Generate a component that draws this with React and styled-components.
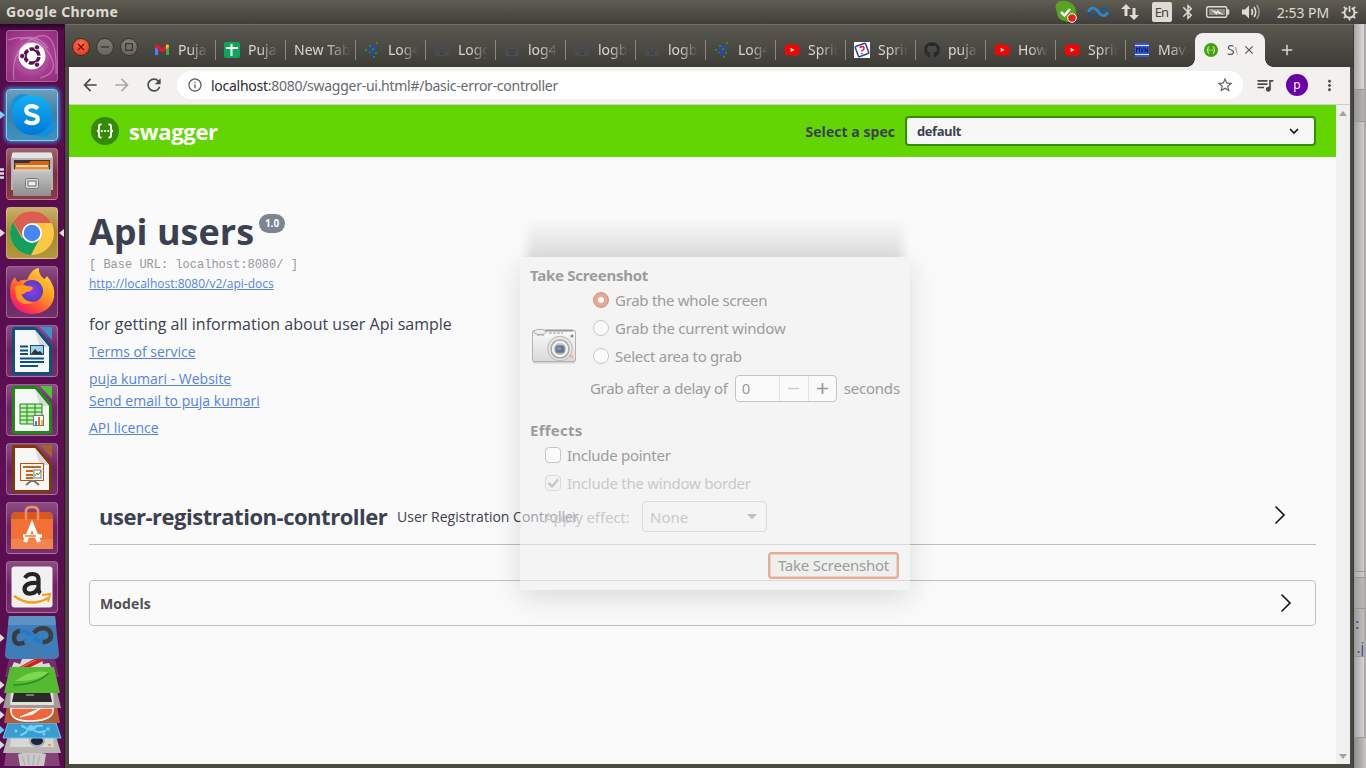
import React from "react";
import styled, { createGlobalStyle, css } from "styled-components";
import {
  MdArrowBack, MdArrowForward, MdRefresh, MdInfoOutline, MdStarBorder,
  MdQueueMusic, MdMoreVert, MdClose, MdAdd, MdBluetooth,
} from "react-icons/md";
import { FaGithub } from "react-icons/fa";

const GlobalStyle = createGlobalStyle`
  * { box-sizing: border-box; }
  body { margin: 0; overflow: hidden; background: #3c3b37; }
  svg { display: block; flex: none; }
`;

const ui = `"Noto Sans", "Open Sans", sans-serif`;
const page = `"Open Sans", "Noto Sans", sans-serif`;

const Screen = styled.div`
  width: 1366px; height: 768px; overflow: hidden; position: relative;
  display: flex; flex-direction: column; font-family: ${ui};
`;
const Label = styled.span`
  white-space: nowrap; letter-spacing: ${(p) => p.$ls || 0}px;
`;

/* ---------- system bar ---------- */
const SystemBar = styled.header`
  height: 24px; flex: none; display: flex; align-items: center; justify-content: space-between;
  padding: 0 7px 0 6px; background: linear-gradient(#5f5c51, #58554c 25%, #403f3a);
  color: #dfdbd2; font-size: 14px;
`;
const AppName = styled(Label)`font-weight: 700; margin-top: -2px;`;
const Tray = styled.div`display: flex; align-items: center; height: 24px;`;
const TraySlot = styled.div`
  width: ${(p) => p.$w}px; height: 24px; display: flex; align-items: center; justify-content: center;
`;
const LangBox = styled.div`
  width: 20px; height: 20px; border-radius: 2px; background: #dfdbd2; color: #45443e;
  font-size: 13px; line-height: 20px; text-align: center; letter-spacing: -0.8px;
`;

/* ---------- desktop area ---------- */
const Desktop = styled.div`flex: 1; min-height: 0; display: flex;`;
const Launcher = styled.nav`
  width: 65px; flex: none; display: flex; flex-direction: column; align-items: flex-start; gap: 7px;
  padding-top: 6px; background: linear-gradient(#2b0526, #560b4d 8px, #5c0f52 60%, #570d4e);
  border-right: 1px solid #3a0a35;
`;
const LaunchRow = styled.div`position: relative; width: 64px; height: 52px; padding-left: 6px; flex: none;`;
const tileLook = {
  dash: "radial-gradient(circle at 50% 50%, #d48ac4, #a33a8d 60%, #8e2d7c)",
  skype: "linear-gradient(#6d9fb8, #3d7fa6 50%, #4390bd)",
  files: "linear-gradient(#9c626b, #7c2f3e 50%, #8c3a44)",
  chrome: "linear-gradient(#c9b06a, #a68932 45%, #b4973c)",
  plain: "linear-gradient(#8d4c84, #6a2360 50%, #752f6b)",
};
const Tile = styled.div`
  width: 52px; height: 52px; border-radius: 4px; overflow: hidden;
  background: ${(p) => tileLook[p.$look]};
  border: 1px solid rgba(255, 255, 255, 0.25);
  display: flex; align-items: center; justify-content: center;
  ${(p) => p.$look === "skype" && css`border-color: #7fd0fb; box-shadow: 0 0 4px 1px #38a6e8;`}
`;
const Marker = styled.svg`position: absolute; top: 20px; ${(p) => (p.$right ? "left: 59px;" : "left: 0;")}`;
const StackHolder = styled.div`margin-top: -6px;`;

const WindowFrame = styled.main`
  width: 1289px; flex: none; display: flex; flex-direction: column;
  padding: 0 3px 4px 4px; background: #4a4942; border-top: 1px solid #706e66;
  border-right: 1px solid #393834;
`;
const Behind = styled.aside`
  flex: 1; min-width: 0; display: flex; flex-direction: column; background: linear-gradient(90deg, #8f8d8b, #bcbab8 80%, #cac8c5);
`;
const BehindBlock = styled.div`
  height: ${(p) => p.$h}px; flex: none; overflow: hidden;
  background: linear-gradient(90deg, ${(p) => p.$a}, ${(p) => p.$b});
  border-bottom: 1px solid #989694; border-right: 2px solid #aaa8a6;
  display: flex; flex-direction: column; justify-content: flex-end; align-items: flex-end;
  color: #2d4a8e; font-size: 14px; line-height: 17px;
`;
const BehindMark = styled.span`margin: 0 5px 7px 0; color: #2a2aa8;`;

/* ---------- browser chrome ---------- */
const TabStrip = styled.div`
  height: 42px; flex: none; display: flex; align-items: flex-end; margin: 0 -3px 0 -4px; padding-left: 7px;
  background: linear-gradient(#5a5950, #4b4a43 50%, #3d3c37);
`;
const Controls = styled.div`display: flex; gap: 6px; height: 42px; align-items: center; padding-top: 2px; width: 74px;`;
const Control = styled.div`
  width: 18px; height: 18px; border-radius: 50%; border: 1px solid #35342f;
  display: flex; align-items: center; justify-content: center;
  background: ${(p) => (p.$close ? "radial-gradient(circle at 50% 30%, #ff6a4a, #e8301c)" : "linear-gradient(#7d7b72, #68675f)")};
`;
const Tab = styled.div`
  width: 70px; height: 34px; display: flex; align-items: center; gap: 8px; padding: 0 0 1px 8px;
  color: #dad6cd; font-size: 14px;
  background: linear-gradient(#8b897f, #8b897f) right 7px / 1px 20px no-repeat;
  ${(p) => p.$last && css`background: none;`}
`;
const TabText = styled.span`
  flex: 1; overflow: hidden; white-space: nowrap; line-height: 20px; margin-right: ${(p) => (p.$wide ? 5 : 8)}px;
  letter-spacing: ${(p) => p.$ls || 0}px;
  mask-image: linear-gradient(90deg, #000 ${(p) => (p.$wide ? 32 : 12)}px, transparent 100%);
`;
const ActiveTab = styled.div`
  width: 70px; height: 34px; display: flex; align-items: center; padding: 0 9px 1px 9px; margin-left: -1px; position: relative;
  background: #f2f1f0; border-radius: 8px 8px 0 0; color: #55544f; font-size: 14px;
  &::before, &::after { content: ""; position: absolute; bottom: 0; width: 8px; height: 8px; }
  &::before { left: -8px; background: radial-gradient(circle at 0 0, transparent 7.5px, #f2f1f0 8px); }
  &::after { right: -8px; background: radial-gradient(circle at 100% 0, transparent 7.5px, #f2f1f0 8px); }
`;
const ActiveText = styled.span`
  width: 12px; margin-left: 9px; margin-right: 4px; overflow: hidden; white-space: nowrap;
  mask-image: linear-gradient(90deg, #000 6px, transparent 12px);
`;
const NewTab = styled.div`width: 44px; height: 34px; display: flex; align-items: center; justify-content: center; color: #dad6cd;`;

const Toolbar = styled.div`
  height: 38px; flex: none; display: flex; align-items: center; background: #f2f1f0;
  border-bottom: 1px solid #cfcdca; color: #4a4a4a; padding: 0 0 1px 5px;
`;
const NavIcon = styled.div`
  width: 32px; display: flex; justify-content: center; color: ${(p) => (p.$dim ? "#aaa9a8" : "#4a4a4a")};
`;
const Omnibox = styled.div`
  width: 1066px; height: 28px; border-radius: 14px; background: #fff; margin-left: 7px;
  display: flex; align-items: center; padding: 0 9px 0 10px; color: #5f6368;
`;
const Url = styled(Label)`
  flex: 1; margin-left: 8px; font-size: 14px; color: #66696d;
  b { font-weight: 400; color: #2a2b2d; }
`;
const QueueSlot = styled.div`width: 22px; margin-left: 11px; display: flex; justify-content: center;`;
const Avatar = styled.div`
  width: 22px; height: 22px; border-radius: 50%; background: #6a00a8; color: #fff;
  font-size: 12px; line-height: 21px; text-align: center; margin: 0 13px 0 10px;
`;

/* ---------- page ---------- */
const Viewport = styled.div`flex: 1; min-height: 0; display: flex; background: #fafafa;`;
const Page = styled.div`width: 1267px; font-family: ${page}; color: #3b4151;`;
const Scrollbar = styled.div`
  flex: 1; background: #f0f0f0; display: flex; flex-direction: column; justify-content: space-between; align-items: center;
  padding: 6px 0 5px;
`;
const Topbar = styled.div`
  height: 52px; background: #62d503; display: flex; align-items: center; padding: 0 20px 0 22px;
`;
const Brand = styled(Label)`color: #fff; font-weight: 700; font-size: 22px; margin-left: 10px; flex: 1; line-height: 30px;`;
const SpecLabel = styled(Label)`font-weight: 700; font-size: 14px; margin-right: 10px;`;
const SpecSelect = styled.div`
  width: 411px; height: 30px; border: 2px solid #398c05; border-radius: 4px; background: #f7f7f7;
  display: flex; align-items: center; justify-content: space-between; padding: 0 15px 0 10px; font-weight: 700; font-size: 13px;
`;
const Info = styled.section`padding: 50px 20px 0; display: flex; flex-direction: column; align-items: flex-start;`;
const TitleRow = styled.div`height: 50px; display: flex; align-items: flex-start;`;
const Title = styled.h1`margin: 0; font-size: 36px; line-height: 50px; font-weight: 700; white-space: nowrap;`;
const Version = styled.span`
  margin: 7px 0 0 5px; width: 26px; height: 19px; border-radius: 10px; background: #7d8492; color: #fff;
  font-size: 10px; font-weight: 700; line-height: 19px; text-align: center;
`;
const BaseUrl = styled.div`font: 12px/16px "Liberation Mono", monospace; color: #96989d; white-space: pre;`;
const Link = styled.a`
  color: #5483e0; text-decoration: underline; white-space: nowrap; font-size: ${(p) => p.$size || 14}px;
  line-height: 20px; margin-top: ${(p) => p.$mt}px;
`;
const Description = styled.p`margin: 19px 0 9px; font-size: 16px; line-height: 22px; letter-spacing: 0.01px;`;
const Section = styled.section`
  margin: 51px 20px 0; height: 56px; border-bottom: 1px solid #bcbdc4; display: flex; align-items: center; padding: 0 30px 0 10px;
  svg { margin-top: -4px; }
`;
const SectionName = styled.h2`margin: -2px 0 0; font-size: 22px; line-height: 40px; width: 288px; white-space: nowrap; letter-spacing: -0.48px;`;
const SectionNote = styled(Label)`font-size: 14px; margin-left: 10px; flex: 1;`;
const Models = styled.section`
  margin: 35px 20px 0; height: 46px; border: 1px solid #bfc0c4; border-radius: 4px;
  display: flex; align-items: center; justify-content: space-between; padding: 0 23px 0 10px;
  font-size: 14px; font-weight: 700; color: #505050; letter-spacing: 0.1px;
`;

/* ---------- screenshot dialog, fading over the page ---------- */
const Dialog = styled.div`
  position: absolute; left: 520px; top: 257px; width: 390px; height: 333px; padding: 9px 10px 0;
  background: rgba(239, 239, 239, 0.55); box-shadow: 0 8px 28px rgba(0, 0, 0, 0.13);
  color: #9c9c9b; font-size: 15px; display: flex; flex-direction: column;
  &::before {
    content: ""; position: absolute; left: 0; right: 0; bottom: 100%; height: 40px;
    background: linear-gradient(rgba(0,0,0,0), rgba(0,0,0,0.06) 50%, rgba(0,0,0,0.1));
    mask-image: linear-gradient(90deg, transparent, #000 14px, #000 376px, transparent);
  }
`;
const Heading = styled.div`
  font-weight: 700; height: 18px; line-height: 18px; white-space: nowrap; letter-spacing: ${(p) => p.$ls || 0}px;
  margin: ${(p) => (p.$second ? "9px 0 2px" : "0")};
`;
const GrabArea = styled.div`display: flex; height: 126px; margin-top: 2px;`;
const CameraCell = styled.div`width: 60px; flex: none; padding: 42px 0 0 1px;`;
const Options = styled.div`flex: 1; display: flex; flex-direction: column;`;
const Option = styled.label`
  height: 28px; flex: none; display: flex; align-items: center; gap: 6px; padding-left: ${(p) => p.$pad || 0}px;
  color: ${(p) => (p.$off ? "#c9c9c8" : "#9c9c9b")};
`;
const Radio = styled.i`
  width: 16px; height: 16px; border-radius: 50%; flex: none; background: ${(p) => (p.$on ? "radial-gradient(circle, #fff 2.5px, #e8a892 3.5px)" : "#fbfbfb")};
  border: 1px solid ${(p) => (p.$on ? "#cf9481" : "#cacaca")};
`;
const Check = styled.i`
  width: 16px; height: 16px; border-radius: 4px; flex: none; border: 1px solid ${(p) => (p.$off ? "#dadada" : "#c6c6c6")};
  background: ${(p) => (p.$off ? "#f2f2f2" : "#fbfbfb")}; display: flex; align-items: center; justify-content: center;
`;
const Delay = styled.div`display: flex; align-items: center; height: 28px; margin-top: 4px; white-space: nowrap;`;
const Spin = styled.div`
  width: 102px; height: 27px; flex: none; margin: 0 7px; border: 1px solid #c4c4c3; border-radius: 4px; background: #fafafa; display: flex; align-items: center;
`;
const SpinCell = styled.div`
  width: ${(p) => p.$w}px; height: 25px; display: flex; align-items: center; padding-left: ${(p) => (p.$text ? 6 : 0)}px;
  justify-content: ${(p) => (p.$text ? "flex-start" : "center")}; border-left: ${(p) => (p.$text ? "none" : "1px solid #e4e4e4")};
`;
const EffectRow = styled.div`
  display: flex; align-items: center; justify-content: space-between; height: 31px; flex: none; margin-top: 4px; padding-left: 14px;
  width: 237px; color: #c9c9c8; white-space: nowrap;
`;
const Combo = styled.div`
  width: 125px; height: 31px; flex: none; border: 1px solid #dcdcdc; border-radius: 4px; display: flex; align-items: center;
  justify-content: space-between; padding: 0 9px 0 7px;
`;
const TakeButton = styled.div`
  align-self: flex-end; width: 131px; height: 27px; margin: 20px 1px 0 0; border: 2px solid #e3ad9a; border-radius: 4px;
  background: #efefee; box-shadow: inset 0 0 0 1px #f5cfc1; text-align: center; line-height: 23px; white-space: nowrap;
`;

/* ---------- icons ---------- */
const Chevron = () => (
  <svg width="12" height="20" viewBox="0 0 12 20" fill="none" stroke="#151515" strokeWidth="1.6"><path d="M1.5 1.5 10 10l-8.5 8.5" /></svg>
);
const Gmail = () => (
  <svg width="16" height="16" viewBox="0 0 16 16">
    <path d="M1 4v9h3V6.5z" fill="#4285f4" /><path d="M12 6.5V13h3V4z" fill="#34a853" />
    <path d="M1 4.2C1 2.6 2.7 2 4 3l4 3.2L12 3v4.3l-4 3.2-4-3.2-3-2z" fill="#ea1430" /><path d="M12 3c1.4-1 3-.4 3 1.2V5l-3 2.4z" fill="#fbbc04" />
  </svg>
);
const Sheets = () => (
  <svg width="16" height="16" viewBox="0 0 16 16"><rect width="16" height="16" rx="2" fill="#0aa858" /><path d="M2 6h12M7.5 2v12" stroke="#fff" strokeWidth="2" /></svg>
);
const Pixels = () => (
  <svg width="16" height="16" viewBox="0 0 16 16">
    <path d="M3 5h2v2H3zM7 3h3v3H7zM5 7h3v2H5zM9 6h3v3H9zM7 9h3v3H7zM11 4h2v2h-2zM6 11h2v3H6z" fill="#2f43bd" />
    <path d="M12 0h2v2h-2zM5 3h2v2H5zM1 7h2v2H1zM8 6h2v2H8zM4 10h2v1H4zM11 10h2v2h-2zM9 14h2v2H9z" fill="#1e951e" />
  </svg>
);
const SadFolder = () => (
  <svg width="16" height="16" viewBox="0 0 16 16"><path d="M1 3h6l1 1h7v10H1z" fill="#4a4b4d" /><path d="M5 8l2 1M11 8 9 9M6 12q2-2 4 0" stroke="#38383a" fill="none" /></svg>
);
const YouTube = () => (
  <svg width="16" height="16" viewBox="0 0 16 16"><rect x="1" y="2.7" width="14.3" height="10.6" rx="2.6" fill="#f00" /><path d="M6.7 5.7v4.4L10.4 8z" fill="#fff" /></svg>
);
const Quiz = () => (
  <svg width="16" height="16" viewBox="0 0 16 16"><path fill="#fff" d="M0 0h16v16H0z" />
    <rect x="2.5" y="2.5" width="11" height="11" rx="1.5" fill="none" stroke="#27479a" strokeWidth="1.5" transform="rotate(-20 8 8)" />
    <path d="M6 6.2q.4-1.8 2.4-1.6T10 6.7Q9.800 8 8 8.500V9.500M7.800 11v1.200" stroke="#e8203c" strokeWidth="1.600" fill="none" /></svg>
);
const Mvn = () => (
  <svg width="16" height="16" viewBox="0 0 16 16"><path fill="#3558d8" d="M1 1h14v14H1z" /><path stroke="#dfe6ff" d="M1 3.500h14M1 12.500h14" />
    <path d="M2.500 10.500v-5l1.500 2 1.500-2v5M7 5.500l1.200 5 1.200-5M11 10.500v-5l2.500 5v-5" stroke="#14225f" fill="none" /></svg>
);
const SwaggerMark = ({ size, bg, line }) => (
  <svg width={size} height={size} viewBox="0 0 28 28"><circle cx="14" cy="14" r="14" fill={bg} />
    <g fill="none" stroke={line} strokeWidth="1.900"><path d="M10.500 7.500H9.500Q8 7.500 8 9v3q0 2-2 2 2 0 2 2v3q0 1.500 1.500 1.500h1M17.500 7.500h1Q20 7.500 20 9v3q0 2 2 2-2 0-2 2v3q0 1.500-1.500 1.500h-1" /></g>
    <g fill={line}><circle cx="10.800" cy="14" r="1.100" /><circle cx="14" cy="14" r="1.100" /><circle cx="17.200" cy="14" r="1.100" /></g></svg>
);

const DashIcon = () => (
  <svg width="52" height="52" viewBox="0 0 52 52">
    <g fill="none" stroke="#e3b3da" strokeOpacity=".5" strokeWidth="1.200"><path d="M8 50Q4 20 28 8T50 44M2 10q26-8 40 12t-8 26M14 10Q30 2 42 18" /></g>
    <circle cx="26" cy="27" r="14" fill="#7d2a6e" opacity=".35" /><circle cx="26" cy="26" r="13.500" fill="#fff" />
    <circle cx="26" cy="26" r="7" fill="none" stroke="#5c1350" strokeWidth="3.500" strokeDasharray="13 1.660" strokeDashoffset="-1" />
    <g fill="#5c1350" stroke="#fff" strokeWidth=".8"><circle cx="16.200" cy="26" r="2.600" /><circle cx="31" cy="17.300" r="2.600" /><circle cx="31" cy="34.700" r="2.600" /></g>
  </svg>
);
const SkypeIcon = () => (
  <svg width="52" height="52" viewBox="0 0 52 52">
    <defs><linearGradient id="sk" x2="0" y2="1"><stop stopColor="#14b2f2" /><stop offset="1" stopColor="#0078d8" /></linearGradient></defs>
    <circle cx="17" cy="17" r="12" fill="#1593d8" /><circle cx="36" cy="36" r="12" fill="#1090dd" /><circle cx="26" cy="26" r="20" fill="url(#sk)" />
    <path d="M32 19.500Q29 17 25.500 17.200q-5.500.2-5.200 4.300.2 3.300 5.500 4.300 6 1 6 4.300 0 4-6 4.100-4 0-6.600-2.400" fill="none" stroke="#fff" strokeWidth="4.200" />
  </svg>
);
const FilesIcon = () => (
  <svg width="52" height="52" viewBox="0 0 52 52">
    <defs><linearGradient id="fl" x2="0" y2="1"><stop stopColor="#c7c7c7" /><stop offset="1" stopColor="#8f8f8f" /></linearGradient></defs>
    <path d="M7 4h38l2 5v33H5V9z" fill="#b5b5b5" /><path d="M6 5h40v5H6z" fill="#e4e4e4" /><path d="M8 12h36v12H8z" fill="#353535" />
    <path d="M9 15h14l2-2h18v9H9z" fill="#d8641c" /><path d="M10 17h32v2H10z" fill="#f9d59f" /><path d="M9 19h34v3H9z" fill="#f08b3a" />
    <path d="M7 22h38v26H7z" fill="url(#fl)" /><path d="M7 22h38" stroke="#ddd" />
    <rect x="19.500" y="30.500" width="13" height="10" rx="2" fill="#ddd" stroke="#777" /><rect x="22" y="33" width="8" height="5" fill="#eee" stroke="#666" />
  </svg>
);
const ChromeIcon = () => (
  <svg width="52" height="52" viewBox="0 0 52 52">
    <circle cx="26" cy="26" r="22" fill="#fcc843" />
    <path d="M7 15A22 22 0 0 0 25 48L34 31 16 31z" fill="#14a05c" /><path d="M7 15l10 16 9-15h19.500A22 22 0 0 0 7 15z" fill="#da5f50" />
    <circle cx="26" cy="26" r="10" fill="#fff" /><circle cx="26" cy="26" r="8.300" fill="#4687f4" />
  </svg>
);
const FirefoxIcon = () => (
  <svg width="52" height="52" viewBox="0 0 52 52">
    <defs><linearGradient id="ff" x1="1" x2=".2" y2="1"><stop stopColor="#fff04a" /><stop offset=".45" stopColor="#ff9a1f" /><stop offset=".8" stopColor="#ff3a46" /><stop offset="1" stopColor="#e8148c" /></linearGradient>
      <radialGradient id="fp"><stop stopColor="#8a3ff0" /><stop offset="1" stopColor="#5a3cc0" /></radialGradient></defs>
    <path d="M4 27Q3 17 9 11q1 4 3 5 4-3 9-2Q26 2 33 2q-1 6 5 11 2-1 3-3 9 10 7 22Q44 47 26 48 6 47 4 27z" fill="url(#ff)" />
    <circle cx="26" cy="25" r="11" fill="url(#fp)" /><path d="M9 21q7-4 12-1 6 0 6 2-2 4-7 4-2 3-5 2 4 9 14 8Q15 42 10 31z" fill="#ff981f" />
  </svg>
);
const OfficeDoc = ({ color, light, kind }) => (
  <svg width="52" height="52" viewBox="0 0 52 52">
    <path d="M8 2h22l16 18v28q0 2-2 2H8q-2 0-2-2V4q0-2 2-2z" fill={color} /><path d="M34 2h12v13z" fill={light} />
    <path d="M9 5h20l14 17v25H9z" fill="#f7f7f7" /><path d="M29 5l14 17h-9z" fill="#dadada" />
    {kind === "writer" && <g><path d="M14 21.500h8M14 25.500h8M14 29h8M14 33.500h24M14 37h24M14 41h18" stroke={color} strokeWidth="2" /><rect x="24.500" y="20.500" width="13" height="9" fill="#9fd2ef" stroke={color} /><path d="M25 29l4-5 3 3 2-1 3 3z" fill="#333" /></g>}
    {kind === "calc" && <g><path d="M14 20h22v20H14z" fill="#c5f0b4" stroke={color} /><path d="M14 24h22M14 28h22M14 32h22M14 36h22M21 20v20M29 20v20" stroke={color} /><rect x="27.500" y="31.500" width="10" height="10" fill="#fff" stroke="#777" /><path d="M29 37h2v4h-2z" fill="#1598dd" /><path d="M32 33h2v8h-2z" fill="#f26b1d" /><path d="M35 36h2v5h-2z" fill="#f9b927" /></g>}
    {kind === "impress" && <g><rect x="14.500" y="20.500" width="23" height="17" fill="#fff5ea" stroke="#b25414" /><path d="M17 24h18M20 28h7M20 32h7M20 35h7" stroke="#c2651f" strokeWidth="2" /><rect x="28" y="27" width="7" height="8" fill="#fff" stroke="#777" /><path d="M29 33l2-3 1 2 3-4" stroke="#26a026" fill="none" /><path d="M20 42l5-4h3l5 4" stroke="#777" strokeWidth="2" fill="none" /></g>}
  </svg>
);
const SoftwareIcon = () => (
  <svg width="52" height="52" viewBox="0 0 52 52">
    <path d="M8 10h36l3 4v33H5V14z" fill="#ef7136" /><path d="M5 13l3-3h36l3 3v4H5z" fill="#d65822" /><path d="M5 37h42v10H5z" fill="#f3824c" />
    <path d="M20 18V9q0-4 6-4t6 4v9" fill="none" stroke="#f0936b" strokeWidth="2.500" />
    <path d="M19 40l7-17 7 17" fill="none" stroke="#fff" strokeWidth="4" /><path d="M17 34h19" stroke="#fff" strokeWidth="3.500" /><path d="M19 34h11" stroke="#f07a2a" strokeWidth="1.500" />
  </svg>
);
const AmazonIcon = () => (
  <svg width="52" height="52" viewBox="0 0 52 52">
    <rect x="5.500" y="5.500" width="41" height="41" rx="3" fill="#f1f1f1" />
    <path d="M19 17q2-4 7.500-4t6 5v10q0 3 2 4.500M32 22q-13-1-13.500 6 .5 5 6 4.500Q30 32 32 27" fill="none" stroke="#252525" strokeWidth="4.200" />
    <path d="M8 35q17 12 34 2" fill="none" stroke="#ff9a14" strokeWidth="2.600" /><path d="M36 34l8-1-2 8" fill="none" stroke="#ff9a14" strokeWidth="2" />
  </svg>
);
const StackedIcons = () => (
  <svg width="64" height="154" viewBox="0 614 64 154">
    <g fill="#dedada"><path d="M0 634l4.500 4-4.500 4zM0 681l4.500 4-4.500 4zM0 696l4.500 4-4.500 4zM0 711l4.500 4-4.500 4zM0 741l4.500 4-4.500 4z" /></g><path d="M0 726l4.500 4-4.500 4z" fill="#6cc8f5" />
    <path d="M7 746h50l3 20H4z" fill="#84447b" /><path d="M18 754q14-4 28 0l-2 12H20z" fill="#cbc9c6" /><path d="M22 756l3 9m3-10l1 10m5-10l-1 10m7-9l-3 9" stroke="#aaa" />
    <path d="M8 736h48l5 17H3z" fill="#bab7b2" /><path d="M11 738h42l1 9H10z" fill="#d8d7d5" /><ellipse cx="37" cy="741" rx="7" ry="5" fill="#18263f" stroke="#aaa" strokeWidth="2" /><path d="M48 744h3v2h-3z" fill="#e9a030" />
    <path d="M8 723h48l5 15H3z" fill="#3a9dcd" stroke="#67c6f0" />
    <path d="M21 735q6-2 7-6l-6-3m8 2q3 3 7-2m-4 3q4 5 12 2m-11-4q4-2 8-1" stroke="#6fd2ff" strokeWidth="2" fill="none" strokeLinecap="round" /><g fill="#6fd2ff"><circle cx="16" cy="731" r="1.500" /><circle cx="48" cy="729" r="1.800" /><circle cx="31" cy="728" r="3" /><circle cx="44" cy="734" r="1.500" /></g>
    <path d="M7 706h50l3 17H4z" fill="#b95a34" /><path d="M11 708h42q2 12-21 13T11 708z" fill="#f0653a" stroke="#fff" strokeWidth="1.500" /><path d="M20 717l21-9-8 6z" stroke="#fff" fill="#fff" />
    <path d="M7 691h50l4 17H3z" fill="#a19a99" /><path d="M11 692h42l1 13H10z" fill="#e1e0df" /><path d="M14 692h36l2 10H12z" fill="#292929" /><path d="M26 694h8v2h-8z" fill="#777" />
    <path d="M9 659h46l4 18H5z" fill="#762e69" /><path d="M14 662l6 2 2-5h20l1 5 6-1 3 6-5 3 1 5H15l1-5-5-3z" fill="#dad8d8" /><path d="M12 671l24-13h10l-5 4-27 13q-4 0-2-4z" fill="#cf2020" /><path d="M14 671l22-11" stroke="#ee7770" />
    <path d="M10 667h44l6 26H4z" fill="#55b932" /><path d="M15 681l8-5q10-6 26-4-10 10-34 9z" fill="#7fd64f" /><path d="M13 685q23 0 36-12" stroke="#2c8b22" strokeWidth="1.700" fill="none" />
    <path d="M9 616h46l4 38q.500 5-5 5H10q-5.500 0-5-5z" fill="#3f7db8" /><path d="M9 616h46l1 9H8z" fill="#5c93c4" />
    <g transform="rotate(-4 32 636)">
      <path d="M27 641q-12 5-13-3 0-8 7-8" stroke="#383b40" strokeWidth="4.500" fill="none" /><path d="M42 643q9 0 9-7-1-7-8-7-5 0-9 4" stroke="#3b3e42" strokeWidth="4.500" fill="none" />
      <path d="M20 630q6 0 12 6.500t10 6.500" stroke="#237ac8" strokeWidth="4" fill="none" /><path d="M24 642q5-1 9-6" stroke="#2b86d0" strokeWidth="4" fill="none" />
    </g>
  </svg>
);
const Camera = () => (
  <svg width="46" height="36" viewBox="0 0 46 36">
    <defs><linearGradient id="cam" x2="0" y2="1"><stop stopColor="#fafafa" /><stop offset="1" stopColor="#d9d9d9" /></linearGradient></defs>
    <path d="M2 34.500h42" stroke="#d2d2d2" strokeWidth="2" /><rect x="1.500" y="2.500" width="43" height="31" rx="1.500" fill="url(#cam)" stroke="#b3b3b3" />
    <path d="M14 2.500h28" stroke="#969696" strokeWidth="2" /><ellipse cx="9" cy="4" rx="6" ry="2.700" fill="#eee" stroke="#aaa" /><path d="M6 7h8m4-2h14" stroke="#999" strokeDasharray="3 1" />
    <circle cx="29" cy="20.500" r="12.300" fill="#e4e4e4" stroke="#b9b9b9" /><circle cx="29" cy="21" r="9" fill="#f2f2f2" stroke="#aaa" strokeWidth="1.500" /><circle cx="29" cy="21" r="6" fill="#c2c2c2" />
    <rect x="24.500" y="17.500" width="9" height="7.500" rx="2" fill="#69738a" stroke="#999" /><path d="M26 19h4v3h-4z" fill="#7c95c9" /><circle cx="41" cy="8" r="1.500" fill="#888" /><path d="M39 27h3v3h-3z" fill="#edbd72" />
  </svg>
);

const tabs = [
  [Gmail, "Puja", 0], [Sheets, "Puja", 0], [null, "New Tab", 0.1], [Pixels, "Log4", 0], [SadFolder, "Logg", 0], [SadFolder, "log4j", 0],
  [SadFolder, "logb", 0], [SadFolder, "logb", 0], [Pixels, "Log4", 0], [YouTube, "Sprin", 0], [Quiz, "Sprin", 0],
  [() => <FaGithub size={16} color="#24292e" />, "puja", 0], [YouTube, "How", 0], [YouTube, "Sprin", 0], [Mvn, "Mave", 0],
];
const launchers = [
  ["dash", DashIcon], ["skype", SkypeIcon, "blue"], ["files", FilesIcon, "multi"], ["chrome", ChromeIcon, "both"], ["plain", FirefoxIcon],
  ["plain", () => <OfficeDoc color="#0b5283" light="#3b93c8" kind="writer" />],
  ["plain", () => <OfficeDoc color="#1d8a14" light="#4fc43a" kind="calc" />],
  ["plain", () => <OfficeDoc color="#80370b" light="#ad602c" kind="impress" />],
  ["plain", SoftwareIcon], ["plain", AmazonIcon],
];

function SystemTray() {
  return (
    <Tray>
      <TraySlot $w={33}><svg width="24" height="24" viewBox="0 0 24 24"><path d="M7 1q5-1 8 1 7 3 7 10 2 6-3 9-5 2-8 0Q3 20 3 12 0 6 3 3q2-2 4-2z" fill="#57a51e" /><path d="M7 12l3.500 3.500L16 9" stroke="#fff" strokeWidth="2.500" fill="none" /><circle cx="18" cy="18" r="4.300" fill="#ee1d1d" stroke="#fff" /></svg></TraySlot>
      <TraySlot $w={32}><svg width="22" height="14" viewBox="0 0 22 14" fill="none" strokeWidth="2.800"><path d="M10 9.500Q2 14 1.500 7" stroke="#24506f" /><path d="M13 5q6-5 7.500 2" stroke="#265a80" /><path d="M1.500 7q1-5 6-3.500 2 .5 4 3.500t4.500 3.500q4 0 4.500-3.500" stroke="#2f86cf" /></svg></TraySlot>
      <TraySlot $w={32}><svg width="18" height="18" viewBox="0 0 18 18" fill="#dfdbd2"><path d="M5 1l5 5H6.500v7h-3V6H0zM13 17l-5-5h3.500V5h3v7H18z" /></svg></TraySlot>
      <TraySlot $w={31}><LangBox>En</LangBox></TraySlot>
      <TraySlot $w={22}><MdBluetooth size={18} /></TraySlot>
      <TraySlot $w={37}><svg width="24" height="14" viewBox="0 0 24 14"><rect x=".7" y="1.700" width="20" height="10.600" rx="1.500" fill="none" stroke="#dfdbd2" strokeWidth="1.400" /><path d="M22 4.500v5" stroke="#dfdbd2" strokeWidth="2.500" /><path d="M3 4h16v6H3z" fill="#8e8b84" /><path d="M4 4l7 3V5l7 5-7-2v2z" fill="#eeeae2" /></svg></TraySlot>
      <TraySlot $w={30}><svg width="20" height="16" viewBox="0 0 20 16"><path d="M1 5.500h3l4-4v13l-4-4H1z" fill="#dfdbd2" /><g fill="none" stroke="#dfdbd2" strokeWidth="1.600"><path d="M10.500 5q2 3 0 6M13 3q3.500 5 0 10" /><path d="M15.700 1q5 7 0 14" opacity=".5" /></g></svg></TraySlot>
      <TraySlot $w={74}><Label $ls={0}>2:53 PM</Label></TraySlot>
      <TraySlot $w={19}><svg width="17" height="17" viewBox="0 0 17 17" fill="none" stroke="#dfdbd2"><path d="M6.200 4.200a5 5 0 1 0 4.600 0" strokeWidth="1.900" /><path d="M8.500 2v6M.500 8.500h3M13.500 8.500h3M2.800 14.200l2-2M14.200 14.200l-2-2M8.500 13.500v3M2.800 2.800l2 2M14.200 2.800l-2 2" strokeWidth="1.700" /></svg></TraySlot>
    </Tray>
  );
}

function ScreenshotDialog() {
  return (
    <Dialog>
      <Heading $ls={-0.25}>Take Screenshot</Heading>
      <GrabArea>
        <CameraCell><Camera /></CameraCell>
        <Options>
          <Option $pad={3}><Radio $on /><Label $ls={-0.29}>Grab the whole screen</Label></Option>
          <Option $pad={3}><Radio /><Label $ls={-0.23}>Grab the current window</Label></Option>
          <Option $pad={3}><Radio /><Label $ls={-0.26}>Select area to grab</Label></Option>
          <Delay>
            <Label $ls={-0.3}>Grab after a delay of</Label>
            <Spin><SpinCell $w={43} $text>0</SpinCell>
              <SpinCell $w={29}><svg width="11" height="11"><path d="M0 5.500h11" stroke="#cfcfcf" strokeWidth="1.500" /></svg></SpinCell>
              <SpinCell $w={28}><svg width="11" height="11"><path d="M0 5.500h11M5.500 0v11" stroke="#999" strokeWidth="1.700" /></svg></SpinCell></Spin>
            <Label $ls={-0.2}>seconds</Label>
          </Delay>
        </Options>
      </GrabArea>
      <Heading $second $ls={0.25}>Effects</Heading>
      <Option $pad={15}><Check /><Label $ls={-0.28}>Include pointer</Label></Option>
      <Option $pad={15} $off><Check $off><svg width="12" height="12"><path d="M1.500 6l3.500 3.500L11 2.500" fill="none" stroke="#c8c8c8" strokeWidth="2.500" /></svg></Check><Label $ls={-0.25}>Include the window border</Label></Option>
      <EffectRow><Label $ls={-0.15}>Apply effect:</Label><Combo>None<svg width="10" height="6"><path d="M0 0h10L5 5.500z" fill="#c2c2c2" /></svg></Combo></EffectRow>
      <TakeButton><Label $ls={-0.22}>Take Screenshot</Label></TakeButton>
    </Dialog>
  );
}

export default function App() {
  return (
    <Screen>
      <GlobalStyle />
      <SystemBar><AppName $ls={0.36}>Google Chrome</AppName><SystemTray /></SystemBar>
      <Desktop>
        <Launcher>
          {launchers.map(([look, Icon, mark], i) => (
            <LaunchRow key={i}>
              <Tile $look={look}><Icon /></Tile>
              {(mark === "blue" || mark === "both") && <Marker width="5" height="12"><path d="M0 2l5 4-5 4z" fill={mark === "blue" ? "#7cd0fa" : "#dedada"} /></Marker>}
              {mark === "multi" && <Marker width="5" height="14"><path d="M0 1.500h4M0 5.500h4M0 9.500h4" stroke="#dedada" strokeWidth="2.500" /></Marker>}
              {mark === "both" && <Marker $right width="5" height="12"><path d="M5 2L0 6l5 4z" fill="#dedada" /></Marker>}
            </LaunchRow>
          ))}
          <StackHolder><StackedIcons /></StackHolder>
        </Launcher>
        <WindowFrame>
          <TabStrip>
            <Controls>
              <Control $close><svg width="8" height="8"><path d="M1 1l6 6M7 1L1 7" stroke="#5d150b" strokeWidth="1.300" /></svg></Control>
              <Control><svg width="8" height="8"><path d="M0 4h8" stroke="#35342f" strokeWidth="1.300" /></svg></Control>
              <Control><svg width="8" height="8"><rect x=".7" y=".7" width="6.600" height="6.600" fill="none" stroke="#35342f" strokeWidth="1.200" /></svg></Control>
            </Controls>
            {tabs.map(([Icon, text, ls], i) => (
              <Tab key={i} $last={i === tabs.length - 1}>{Icon && <Icon />}<TabText $wide={!Icon} $ls={ls}>{text}</TabText></Tab>
            ))}
            <ActiveTab><SwaggerMark size={14} bg="#43a30c" line="#e9ffe0" /><ActiveText>Sw</ActiveText><MdClose size={14} /></ActiveTab>
            <NewTab><MdAdd size={18} /></NewTab>
          </TabStrip>
          <Toolbar>
            <NavIcon><MdArrowBack size={20} /></NavIcon><NavIcon $dim><MdArrowForward size={20} /></NavIcon><NavIcon><MdRefresh size={20} /></NavIcon>
            <Omnibox><MdInfoOutline size={16} /><Url $ls={-0.27}><b>localhost</b>:8080/swagger-ui.html#/basic-error-controller</Url><MdStarBorder size={18} /></Omnibox>
            <QueueSlot><MdQueueMusic size={20} /></QueueSlot><Avatar>p</Avatar><MdMoreVert size={17} />
          </Toolbar>
          <Viewport>
            <Page>
              <Topbar>
                <SwaggerMark size={28} bg="#358b04" line="#fff" /><Brand $ls={-0.3}>swagger</Brand>
                <SpecLabel $ls={0.05}>Select a spec</SpecLabel>
                <SpecSelect><Label $ls={-0.42}>default</Label><svg width="10" height="7"><path d="M1 1l4 4 4-4" fill="none" stroke="#151515" strokeWidth="1.700" /></svg></SpecSelect>
              </Topbar>
              <Info>
                <TitleRow><Title>Api users</Title><Version>1.0</Version></TitleRow>
                <BaseUrl>[ Base URL: localhost:8080/ ]</BaseUrl>
                <Link $size={12} $mt={1}>http://localhost:8080/v2/api-docs</Link>
                <Description>for getting all information about user Api sample</Description>
                <Link $mt={-2}>Terms of service</Link>
                <Link $mt={7}>puja kumari - Website</Link>
                <Link $mt={2}>Send email to puja kumari</Link>
                <Link $mt={7}>API licence</Link>
              </Info>
              <Section><SectionName>user-registration-controller</SectionName><SectionNote>User Registration Controller</SectionNote><Chevron /></Section>
              <Models>Models<Chevron /></Models>
            </Page>
            <Scrollbar>
              <svg width="8" height="5"><path d="M0 5h8L4 0z" fill="#a3a3a3" /></svg>
              <svg width="8" height="5"><path d="M0 0h8L4 5z" fill="#a3a3a3" /></svg>
            </Scrollbar>
          </Viewport>
        </WindowFrame>
        <Behind>
          <BehindBlock $h={66} $a="#a9a7a5" $b="#dcdad8" />
          <BehindBlock $h={32} $a="#989694" $b="#b5b3b1" />
          <BehindBlock $h={450} $a="#a2a09f" $b="#cecccb" />
          <BehindBlock $h={6} $a="#aaa8a6" $b="#d0cecc" />
          <BehindBlock $h={31} $a="#a19f9d" $b="#bab8b6" />
          <BehindBlock $h={48} $a="#9c9a98" $b="#c1bfbd"><BehindMark>:</BehindMark><span>.j</span></BehindBlock>
          <BehindBlock $h={81} $a="#a3a1a5" $b="#d5d3d5" />
        </Behind>
      </Desktop>
      <ScreenshotDialog />
    </Screen>
  );
}
